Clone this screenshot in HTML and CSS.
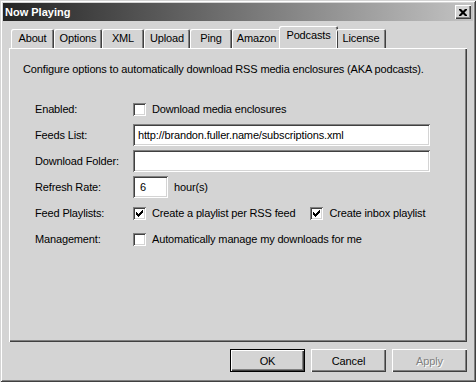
FILE: index.html
```html
<!DOCTYPE html>
<html>
<head>
<title>Now Playing</title>
<link rel="stylesheet" href="styles.css">
</head>
<body>
<div class="window">
	<div class="title_bar">
		<span class="title_text">Now Playing</span>
		<button class="close_btn">
			<svg width="8" height="7" viewBox="0 0 8 7"><path d="M0 0h2l2 2 2-2h2v1l-2.5 2.5L8 6v1H6L4 5 2 7H0V6l2.5-2.5L0 1z" fill="#000"/></svg>
		</button>
	</div>
	<div class="tab_row">
		<div class="tab tab_about">About</div>
		<div class="tab tab_options">Options</div>
		<div class="tab tab_xml">XML</div>
		<div class="tab tab_upload">Upload</div>
		<div class="tab tab_ping">Ping</div>
		<div class="tab tab_amazon">Amazon</div>
		<div class="tab tab_podcasts selected">Podcasts</div>
		<div class="tab tab_license">License</div>
	</div>
	<div class="panel">
		<div class="intro">Configure options to automatically download RSS media enclosures (AKA podcasts).</div>
		<div class="form_grid">
			<div class="row_label">Enabled:</div>
			<div class="row_field">
				<span class="check"></span><span>Download media enclosures</span>
			</div>
			<div class="row_label">Feeds List:</div>
			<div class="row_field">
				<div class="edit wide">http://brandon.fuller.name/subscriptions.xml</div>
			</div>
			<div class="row_label">Download Folder:</div>
			<div class="row_field">
				<div class="edit wide"></div>
			</div>
			<div class="row_label">Refresh Rate:</div>
			<div class="row_field">
				<div class="edit small">6</div><span>hour(s)</span>
			</div>
			<div class="row_label">Feed Playlists:</div>
			<div class="row_field">
				<span class="check"><svg width="7" height="7" viewBox="0 0 7 7"><path d="M0 2h1v1h1v1h1V3h1V2h1V1h1V0h1v3H6v1H5v1H4v1H3v1H2V6H1V5H0z" fill="#000"/></svg></span><span>Create a playlist per RSS feed</span>
				<span class="check second"><svg width="7" height="7" viewBox="0 0 7 7"><path d="M0 2h1v1h1v1h1V3h1V2h1V1h1V0h1v3H6v1H5v1H4v1H3v1H2V6H1V5H0z" fill="#000"/></svg></span><span>Create inbox playlist</span>
			</div>
			<div class="row_label">Management:</div>
			<div class="row_field">
				<span class="check"></span><span>Automatically manage my downloads for me</span>
			</div>
		</div>
	</div>
	<div class="button_row">
		<button class="dlg_btn default_btn">OK</button>
		<button class="dlg_btn">Cancel</button>
		<button class="dlg_btn disabled_btn">Apply</button>
	</div>
</div>
</body>
</html>
```
FILE: styles.css
```css
body
{
	margin : 0;
	font-family : "Liberation Sans", Arial, sans-serif;
	font-size : 11px;
	letter-spacing : -0.15px;
	background-color : #d4d4d4;
}
.window
{
	box-sizing : border-box;
	width : 476px;
	height : 382px;
	padding : 3px;
	background-color : #d4d4d4;
	box-shadow : inset 1px 1px 0 #d4d4d4, inset -1px -1px 0 #404040, inset 2px 2px 0 #fff, inset -2px -2px 0 #808080;
	display : flex;
	flex-direction : column;
}
.title_bar
{
	height : 18px;
	display : flex;
	align-items : center;
	justify-content : space-between;
	padding : 0 2px 0 2px;
	background : linear-gradient(to right, #242424, #c3c3c3);
}
.title_text
{
	color : white;
	font-weight : bold;
	letter-spacing : 0;
}
.close_btn
{
	box-sizing : border-box;
	width : 16px;
	height : 14px;
	padding : 0;
	border : none;
	background-color : #d4d4d4;
	box-shadow : inset 1px 1px 0 #fff, inset -1px -1px 0 #404040, inset -2px -2px 0 #808080;
	display : flex;
	align-items : center;
	justify-content : center;
}
.tab_row
{
	display : flex;
	align-items : flex-end;
	height : 27px;
	padding : 0 0 0 8px;
	position : relative;
	z-index : 1;
}
.tab
{
	box-sizing : border-box;
	height : 19px;
	display : flex;
	align-items : center;
	justify-content : center;
	border-radius : 2px 2px 0 0;
	box-shadow : inset 1px 1px 0 #fff, inset -1px 0 0 #404040, inset -2px 0 0 #808080;
	padding-bottom : 1px;
}
.tab.selected
{
	height : 22px;
	margin : 0 -2px;
	padding-bottom : 4px;
	background-color : #d4d4d4;
}
.tab_about { width : 43px; }
.tab_options { width : 48px; }
.tab_xml { width : 42px; }
.tab_upload { width : 46px; }
.tab_ping { width : 42px; }
.tab_amazon { width : 49px; }
.tab_podcasts { width : 59px; }
.tab_license { width : 50px; }
.panel
{
	box-sizing : border-box;
	margin : 0 6px;
	height : 294px;
	padding : 14px 0 0 14px;
	box-shadow : inset 1px 1px 0 #fff, inset -1px -1px 0 #404040, inset -2px -2px 0 #808080;
}
.intro
{
	height : 14px;
	line-height : 14px;
}
.form_grid
{
	display : grid;
	grid-template-columns : 98px 1fr;
	grid-auto-rows : 22px;
	row-gap : 4px;
	margin : 22px 0 0 12px;
}
.row_label,
.row_field
{
	display : flex;
	align-items : center;
}
.check
{
	box-sizing : border-box;
	width : 13px;
	height : 13px;
	padding : 3px 0 0 3px;
	margin-right : 6px;
	display : flex;
	background-color : white;
	box-shadow : inset 1px 1px 0 #808080, inset -1px -1px 0 #fff, inset 2px 2px 0 #404040, inset -2px -2px 0 #d4d4d4;
}
.check.second
{
	margin-left : 15px;
}
.edit
{
	box-sizing : border-box;
	height : 22px;
	padding : 0 4px 0 5px;
	display : flex;
	align-items : center;
	background-color : white;
	box-shadow : inset 1px 1px 0 #808080, inset -1px -1px 0 #fff, inset 2px 2px 0 #404040, inset -2px -2px 0 #d4d4d4;
}
.edit.wide
{
	width : 297px;
}
.edit.small
{
	width : 35px;
	margin-right : 6px;
	padding-left : 7px;
}
.button_row
{
	display : flex;
	justify-content : flex-end;
	gap : 6px;
	margin : 7px 6px 0 0;
}
.dlg_btn
{
	box-sizing : border-box;
	width : 75px;
	height : 23px;
	padding : 0;
	border : none;
	font-family : "Liberation Sans", Arial, sans-serif;
	font-size : 11px;
	letter-spacing : -0.15px;
	color : black;
	background-color : #d4d4d4;
	box-shadow : inset 1px 1px 0 #fff, inset -1px -1px 0 #404040, inset -2px -2px 0 #808080;
}
.default_btn
{
	box-shadow : inset 0 0 0 1px #000, inset 2px 2px 0 #fff, inset -2px -2px 0 #404040, inset -3px -3px 0 #808080;
}
.disabled_btn
{
	color : #808080;
	text-shadow : 1px 1px 0 #fff;
}
```
